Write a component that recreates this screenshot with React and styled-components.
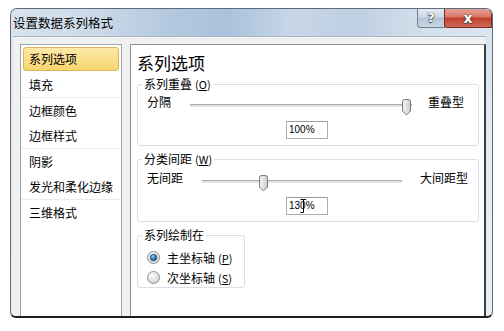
import React from "react";
import styled, { createGlobalStyle } from "styled-components";

const Global = createGlobalStyle`
  html, body { margin: 0; padding: 0; background: #fff; }
  body { font-family: "Noto Sans CJK SC", "Noto Sans", sans-serif; color: #000; }
`;

const Window = styled.div`
  margin: 8px 0 0 10px;
  width: 483px;
  height: 310px;
  box-sizing: border-box;
  border: 1px solid #5d6b7a;
  border-bottom: 2px solid #1c1c1c;
  border-radius: 7px 7px 6px 6px;
  overflow: hidden;
  display: flex;
  flex-direction: column;
  background: linear-gradient(180deg, #d5e1ec 0%, #e4ecf4 40%, #e8eef5 100%);
`;

const TitleBar = styled.div`
  height: 27px;
  flex-shrink: 0;
  display: flex;
  align-items: flex-start;
  justify-content: space-between;
  background: linear-gradient(
    90deg,
    #d9e3ee 0%,
    #cbd9e8 18%,
    #b4c9df 32%,
    #a9c2dc 45%,
    #c7d6e7 58%,
    #bfd0e3 72%,
    #d4e0ec 86%,
    #dce6f0 100%
  );
`;

const Title = styled.div`
  margin: 6px 0 0 2px;
  font-size: 12.5px;
  line-height: 16px;
  color: #000;
  white-space: nowrap;
`;

const Caption = styled.div`
  display: flex;
  margin-top: -1px;
`;

const CapButton = styled.div`
  width: ${(p) => p.$w}px;
  height: 20px;
  box-sizing: border-box;
  display: flex;
  align-items: center;
  justify-content: center;
  border: 1px solid ${(p) => (p.$close ? "#7a2a22" : "#6f7f90")};
  border-top: none;
  border-radius: ${(p) => (p.$close ? "0 6px 0 4px" : "0 0 0 4px")};
  margin-right: ${(p) => (p.$close ? "0" : "-1px")};
  background: ${(p) =>
    p.$close
      ? "linear-gradient(180deg, #e6a79b 0%, #d9786a 45%, #c2412f 55%, #cf6a55 100%)"
      : "linear-gradient(180deg, #e6edf4 0%, #ccd8e5 45%, #b5c5d7 55%, #c8d5e3 100%)"};
  color: #fff;
  font-family: "DejaVu Sans", sans-serif;
  font-weight: bold;
  font-size: ${(p) => (p.$close ? "14px" : "13px")};
  line-height: 1;
  text-shadow: 0 0 1px #333, 0 0 1px #333, 0 1px 1px #444;
`;

const Body = styled.div`
  flex: 1;
  display: flex;
  gap: 8px;
  margin: 0 6px 0 2px;
  padding: 7px 0 0 7px;
  background: #f0f0f0;
  border-top: 1px solid #a8b6c5;
  min-height: 0;
`;

const ListBox = styled.div`
  width: 102px;
  flex-shrink: 0;
  box-sizing: border-box;
  border: 1px solid #9ca3ab;
  border-bottom: none;
  background: #fff;
  padding-top: 1px;
`;

const ListGroup = styled.div`
  border-top: ${(p) => (p.$first ? "none" : "1px solid #ececec")};
`;

const Item = styled.div`
  height: 25px;
  line-height: 25px;
  padding-left: 8px;
  font-size: 12px;
  white-space: nowrap;
`;

const SelectedItem = styled.div`
  height: 24px;
  box-sizing: border-box;
  margin: 1px 2px;
  line-height: 22px;
  padding-left: 5px;
  font-size: 12px;
  border: 1px solid #dcb55a;
  border-radius: 3px;
  background: linear-gradient(180deg, #fdeaa8 0%, #fbe08c 50%, #f8d46e 100%);
`;

const Panel = styled.div`
  flex: 1;
  box-sizing: border-box;
  border: 1px solid #8f98a1;
  border-right: 2px solid #3c3c3c;
  border-bottom: none;
  background: #fff;
  padding: 8px 5px 0 6px;
`;

const Heading = styled.h2`
  margin: 0;
  font-size: 17px;
  line-height: 20px;
  font-weight: normal;
`;

const Group = styled.fieldset`
  margin: ${(p) => p.$mt}px 0 0 0;
  width: ${(p) => p.$w}px;
  box-sizing: border-box;
  min-width: 0;
  border: 1px solid #d5dfe5;
  border-radius: 3px;
  padding: 0 0 ${(p) => p.$pb}px 0;
`;

const Legend = styled.legend`
  font-size: 12px;
  line-height: 16px;
  padding: 0 2px;
  margin-left: 4px;
  white-space: nowrap;
`;

const Key = styled.span`
  font-size: 11px;
  margin-left: 3px;
  & u { text-decoration: underline; }
`;

const GroupInner = styled.div`
  padding: ${(p) => p.$pt}px 11px 0 9px;
  display: flex;
  flex-direction: column;
`;

const SliderRow = styled.div`
  display: flex;
  align-items: flex-start;
  height: 22px;
`;

const Label = styled.span`
  font-size: 12px;
  line-height: 20px;
  white-space: nowrap;
  margin-left: ${(p) => p.$ml || 0}px;
`;

const SliderBox = styled.div`
  position: relative;
  width: ${(p) => p.$w}px;
  height: 17px;
  margin: 5px 0 0 19px;
  flex-shrink: 0;
`;

const Track = styled.div`
  margin-top: 7px;
  height: 2px;
  border-top: 1px solid #a7a7a7;
  background: #e4e4e4;
`;

const ThumbWrap = styled.div`
  position: absolute;
  top: 0;
  width: 11px;
  height: 17px;
`;

const NumBox = styled.div`
  position: relative;
  align-self: center;
  width: 42px;
  height: 18px;
  box-sizing: border-box;
  margin-top: 7px;
  border: 1px solid #abadb3;
  border-top-color: #9a9ca3;
  padding-left: 2px;
  font-family: "Liberation Sans", Arial, sans-serif;
  font-size: 10px;
  line-height: 16px;
  background: #fff;
`;

const Cursor = styled.svg`
  position: absolute;
  left: 13px;
  top: 1px;
`;

const RadioRow = styled.div`
  display: flex;
  align-items: center;
  gap: 7px;
  height: 20px;
  font-size: 12px;
`;

function Thumb({ pos }) {
  return (
    <ThumbWrap style={{ left: pos }}>
      <svg width="11" height="17" viewBox="0 0 11 17">
        <defs>
          <linearGradient id="tg" x1="0" y1="0" x2="1" y2="0">
            <stop offset="0" stopColor="#f4f4f4" />
            <stop offset="0.5" stopColor="#e2e2e2" />
            <stop offset="1" stopColor="#c9c9c9" />
          </linearGradient>
        </defs>
        <path
          d="M1.5 2.5 Q1.5 0.5 3.5 0.5 H7.5 Q9.5 0.5 9.5 2.5 V12 L5.5 16 L1.5 12 Z"
          fill="url(#tg)"
          stroke="#7a7a7a"
          strokeWidth="1"
        />
      </svg>
    </ThumbWrap>
  );
}

function Slider({ width, pos }) {
  return (
    <SliderBox $w={width}>
      <Track />
      <Thumb pos={pos} />
    </SliderBox>
  );
}

function Radio({ checked }) {
  return (
    <svg width="13" height="13" viewBox="0 0 13 13">
      <defs>
        <radialGradient id="rOff" cx="0.4" cy="0.35" r="0.7">
          <stop offset="0" stopColor="#ffffff" />
          <stop offset="1" stopColor="#cfcfcf" />
        </radialGradient>
        <radialGradient id="rOn" cx="0.4" cy="0.35" r="0.7">
          <stop offset="0" stopColor="#9fd3f4" />
          <stop offset="0.5" stopColor="#2f7fbf" />
          <stop offset="1" stopColor="#1b4f86" />
        </radialGradient>
      </defs>
      <circle cx="6.5" cy="6.5" r="6" fill="url(#rOff)" stroke="#8e8f8f" strokeWidth="1" />
      {checked && <circle cx="6.5" cy="6.5" r="3.3" fill="url(#rOn)" stroke="#21456e" strokeWidth="0.6" />}
    </svg>
  );
}

export default function App() {
  return (
    <>
      <Global />
      <Window>
        <TitleBar>
          <Title>设置数据系列格式</Title>
          <Caption>
            <CapButton $w={28}>?</CapButton>
            <CapButton $w={48} $close>x</CapButton>
          </Caption>
        </TitleBar>
        <Body>
          <ListBox>
            <ListGroup $first>
              <SelectedItem>系列选项</SelectedItem>
              <Item>填充</Item>
            </ListGroup>
            <ListGroup>
              <Item>边框颜色</Item>
              <Item>边框样式</Item>
            </ListGroup>
            <ListGroup>
              <Item>阴影</Item>
              <Item>发光和柔化边缘</Item>
            </ListGroup>
            <ListGroup>
              <Item>三维格式</Item>
            </ListGroup>
          </ListBox>
          <Panel>
            <Heading>系列选项</Heading>
            <Group $mt={3} $w={342} $pb={6}>
              <Legend>
                系列重叠<Key>(<u>O</u>)</Key>
              </Legend>
              <GroupInner $pt={0}>
                <SliderRow>
                  <Label>分隔</Label>
                  <Slider width={222} pos={211} />
                  <Label $ml={16}>重叠型</Label>
                </SliderRow>
                <NumBox>100%</NumBox>
              </GroupInner>
            </Group>
            <Group $mt={5} $w={342} $pb={6}>
              <Legend>
                分类间距<Key>(<u>W</u>)</Key>
              </Legend>
              <GroupInner $pt={1}>
                <SliderRow>
                  <Label>无间距</Label>
                  <Slider width={200} pos={56} />
                  <Label $ml={18}>大间距型</Label>
                </SliderRow>
                <NumBox>
                  130%
                  <Cursor width="7" height="14" viewBox="0 0 7 14">
                    <path d="M0.5 0.5 H3.5 V13.5 H0.5 M3.5 0.5 H6" stroke="#000" strokeWidth="1" fill="none" />
                  </Cursor>
                </NumBox>
              </GroupInner>
            </Group>
            <Group $mt={5} $w={108} $pb={0}>
              <Legend>系列绘制在</Legend>
              <GroupInner $pt={4}>
                <RadioRow>
                  <Radio checked />
                  <span>
                    主坐标轴<Key>(<u>P</u>)</Key>
                  </span>
                </RadioRow>
                <RadioRow>
                  <Radio />
                  <span>
                    次坐标轴<Key>(<u>S</u>)</Key>
                  </span>
                </RadioRow>
              </GroupInner>
            </Group>
          </Panel>
        </Body>
      </Window>
    </>
  );
}
